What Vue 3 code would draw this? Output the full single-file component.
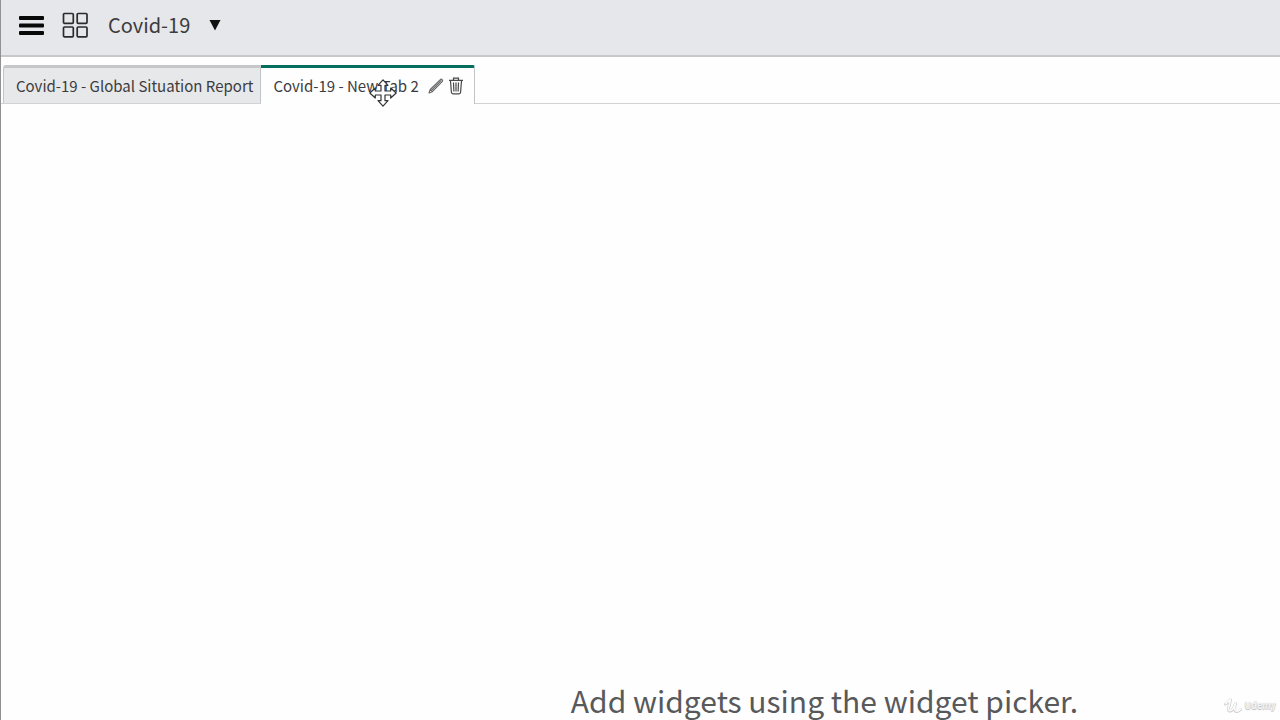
<script setup>
import { ref } from 'vue'

const tabs = [
  { id: 1, label: 'Covid-19 - Global Situation Report' },
  { id: 2, label: 'Covid-19 - New Tab 2' },
]
const active = ref(2)
</script>

<template>
  <div class="page">
    <header class="topbar">
      <button class="icon-btn" type="button" aria-label="Menu">
        <svg width="26" height="20" viewBox="0 0 26 20" fill="#080808">
          <rect x="1" y="1" width="25" height="4" rx="1" />
          <rect x="1" y="8.5" width="25" height="4" rx="1" />
          <rect x="1" y="16" width="25" height="4" rx="1" />
        </svg>
      </button>
      <button class="icon-btn" type="button" aria-label="Dashboards">
        <svg width="26" height="26" viewBox="0 0 26 26" fill="none" stroke="#2b2b2d" stroke-width="1.7">
          <rect x="1.5" y="1.5" width="9.8" height="9.8" rx="1" />
          <rect x="15.2" y="1.5" width="9.8" height="9.8" rx="1" />
          <rect x="1.5" y="15" width="9.8" height="9.8" rx="1" />
          <rect x="15.2" y="15" width="9.8" height="9.8" rx="1" />
        </svg>
      </button>
      <button class="title" type="button">
        <span>Covid-19</span>
        <svg width="12" height="12" viewBox="0 0 12 12" aria-hidden="true"><path d="M.5 1H11.5L6 11.5Z" fill="#111" /></svg>
      </button>
    </header>

    <nav class="tabs">
      <div v-for="tab in tabs" :key="tab.id" class="tab" :class="{ active: tab.id === active }">
        <button class="tab-label" type="button" @click="active = tab.id">{{ tab.label }}</button>
        <span v-if="tab.id === 2" class="tools">
          <button class="icon-btn" type="button" aria-label="Rename tab">
            <svg width="16" height="16" viewBox="0 0 16 16" fill="none" stroke="#686868" stroke-width="1.1" stroke-linejoin="round">
              <path d="M1 15L2.2 11.5L12.6 1.3Q13.4 .8 14.2 1.6Q15.1 2.5 14.4 3.4L4.4 13.7ZM2.2 11.5L4.4 13.7M3.4 12.5L13.4 2.4" />
            </svg>
          </button>
          <button class="icon-btn" type="button" aria-label="Delete tab">
            <svg width="14" height="18" viewBox="0 0 14 18" fill="none" stroke="#484848" stroke-width="1.2">
              <path d="M0 3.3H14M4.5 3V1.2H9.5V3M1.5 4L2.4 15.3Q2.5 16.8 4 16.8H10Q11.5 16.8 11.6 15.3L12.5 4M4.5 5.5L4.9 14.5M7 5.5V14.5M9.5 5.5L9.1 14.5" />
            </svg>
          </button>
          <svg class="pointer" width="28" height="28" viewBox="0 0 28 28" fill="#fff" stroke="#333" stroke-width="1.2" stroke-linejoin="round" aria-hidden="true">
            <path d="M14 .8L19 6.3H16V12H21.7V9L27.2 14L21.7 19V16H16V21.7H19L14 27.2L9 21.7H12V16H6.3V19L.8 14L6.3 9V12H12V6.3H9Z" />
          </svg>
        </span>
      </div>
    </nav>

    <main class="canvas">
      <p class="empty">Add widgets using the widget picker.</p>
    </main>

    <div class="brand">
      <svg width="18" height="16" viewBox="0 0 18 16" fill="none" stroke-linecap="round" stroke-linejoin="round" aria-hidden="true">
        <path d="M1.5 6Q4.5 4.5 6.5 1.8Q5.5 7 4.5 10Q4 13.5 6.5 13Q9.5 12 11.5 5.5Q9.8 11.5 11.5 13Q13.5 14.5 16.5 11.5" stroke="#cfcfcf" stroke-width="3" />
        <path d="M1.5 5.5Q4.5 4 6.5 1.3Q5.5 6.5 4.5 9.5Q4 13 6.5 12.5Q9.5 11.5 11.5 5Q9.8 11 11.5 12.5Q13.5 14 16.5 11" stroke="#fafafa" stroke-width="1.8" />
      </svg>
      <span>Udemy</span>
    </div>
  </div>
</template>

<style>
body {
  margin: 0;
  background: #fefefe;
}
</style>

<style scoped>
.page {
  position: relative;
  box-sizing: border-box;
  display: flex;
  flex-direction: column;
  min-height: 100vh;
  border-left: 1px solid #8f9193;
  background: #fefefe;
  color: #3c3c3e;
  font-family: "Noto Sans CJK SC", "Noto Sans", sans-serif;
}
button {
  border: 0;
  padding: 0;
  background: none;
  color: inherit;
  font: inherit;
  cursor: pointer;
}
.icon-btn {
  display: flex;
}
.topbar {
  display: flex;
  align-items: center;
  flex: none;
  gap: 18px;
  box-sizing: border-box;
  height: 57px;
  padding: 0 17px 5px;
  border-bottom: 2px solid #c6c8ca;
  background: #e6e7eb;
}
.title {
  display: flex;
  align-items: center;
  gap: 19px;
  padding-left: 2px;
  font-size: 20px;
  line-height: 30px;
}
.tabs {
  display: flex;
  flex: none;
  box-sizing: border-box;
  height: 47px;
  padding: 8px 0 0 2px;
  border-bottom: 1px solid #d2d2d4;
}
.tab {
  display: flex;
  align-items: center;
  box-sizing: border-box;
  height: 38px;
  padding: 0 7px 0 12px;
  border: 1px solid #c3c4c6;
  border-top: 3px solid #c6c7c9;
  border-bottom: 0;
  border-radius: 3px 0 0 0;
  background: #e7e8e9;
}
.tab.active {
  height: 39px;
  padding: 0 11px 0 12px;
  border-left: 0;
  border-top-color: #046f5f;
  border-radius: 0 2px 0 0;
  background: #fefefe;
}
.tab-label {
  font-size: 15px;
  line-height: 24px;
  white-space: nowrap;
}
.tools {
  position: relative;
  display: flex;
  align-items: center;
  gap: 5px;
  padding-left: 9px;
}
.pointer {
  position: absolute;
  left: -50px;
  top: 2px;
}
.canvas {
  display: flex;
  flex: 1;
  align-items: flex-end;
  justify-content: center;
  padding-left: 368px;
}
.empty {
  margin: 0;
  color: #58595b;
  font-size: 30px;
  line-height: 40px;
  white-space: nowrap;
}
.brand {
  position: absolute;
  right: 4px;
  bottom: 6px;
  display: flex;
  align-items: center;
  gap: 2px;
  color: #f4f4f4;
  font-size: 9px;
  font-weight: 700;
  line-height: 16px;
  text-shadow: 0 1px 1px #bbb, 0 0 1px #bbb;
}
</style>
